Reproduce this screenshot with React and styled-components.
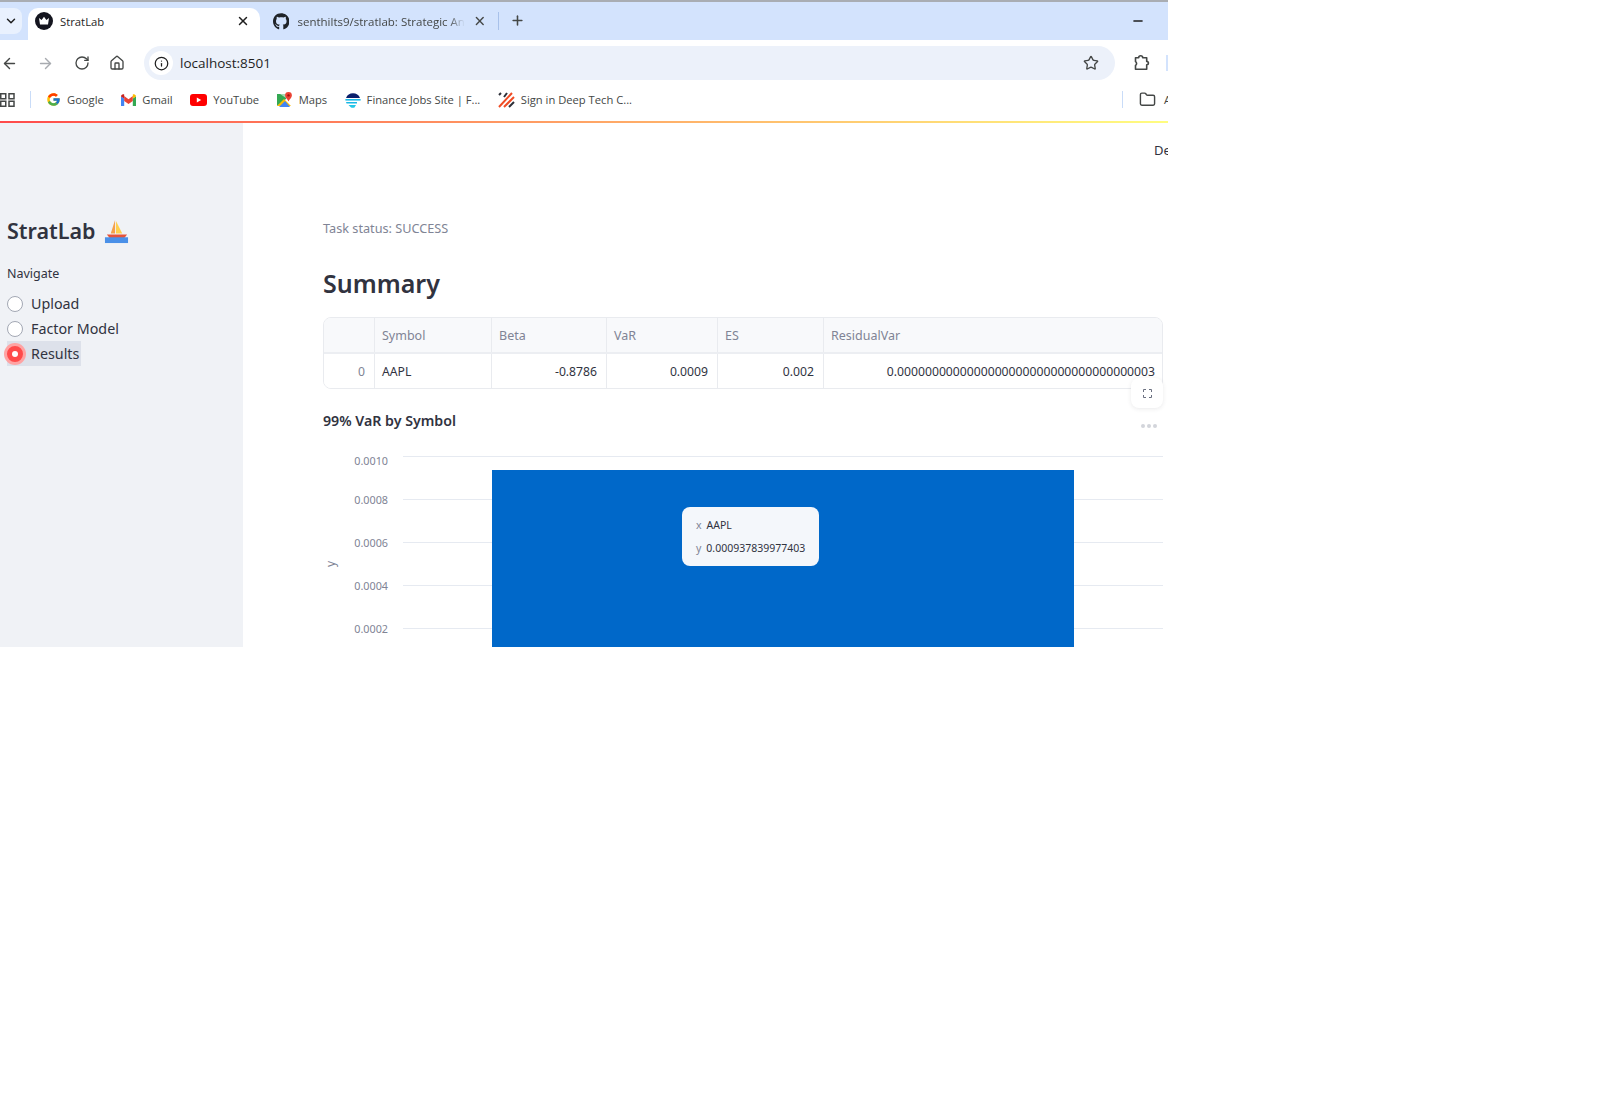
import React from "react";
import styled, { createGlobalStyle } from "styled-components";
import {
  ArrowLeft,
  ArrowRight,
  ChevronDown,
  Folder,
  House,
  Info,
  Minus,
  Plus,
  RotateCw,
  Star,
  X,
} from "lucide-react";
import { FaGithub } from "react-icons/fa";
import { FcGoogle } from "react-icons/fc";

const GlobalStyle = createGlobalStyle`
  html, body {
    margin: 0;
    padding: 0;
    background: #fff;
  }
  * {
    box-sizing: border-box;
  }
`;

const chromeFont = `"Open Sans", "Noto Sans", sans-serif`;
const appFont = `"Noto Sans", "Open Sans", sans-serif`;

function CrownIcon() {
  return (
    <svg width="18" height="18" viewBox="0 0 18 18">
      <circle cx="9" cy="9" r="9" fill="#14151f" />
      <path d="M4 6l2.6 2L9 4.8 11.4 8 14 6l-1 6.4H5z" fill="#fff" />
    </svg>
  );
}

function GmailIcon() {
  return (
    <svg width="15" height="12" viewBox="0 0 15 12">
      <path d="M0 2.2V12h3.2V4.6z" fill="#4285f4" />
      <path d="M15 2.2V12h-3.2V4.6z" fill="#34a853" />
      <path d="M3.2 7V2l4.3 3.2L11.8 2v5L7.5 10z" fill="#ea4335" />
      <path d="M0 2.4C0 .6 2 -.5 3.2 .6V4.6z" fill="#c5221f" />
      <path d="M15 2.4C15 .6 13 -.5 11.8 .6V4.6z" fill="#fbbc04" />
    </svg>
  );
}

function YouTubeIcon() {
  return (
    <svg width="17" height="12" viewBox="0 0 17 12">
      <rect width="17" height="12" rx="3" fill="#f00" />
      <path d="M6.8 3.4v5.2L11.2 6z" fill="#fff" />
    </svg>
  );
}

function MapsIcon() {
  return (
    <svg width="16" height="16" viewBox="0 0 16 16">
      <path d="M0 2h9v5L0 14z" fill="#34a853" />
      <path d="M0 14l7-7 7 7z" fill="#fbbc04" />
      <path d="M2 15l6-6 5 6z" fill="#4285f4" />
      <path d="M3 2h6v4z" fill="#a8dab5" />
      <path d="M11.5 0a3.4 3.4 0 013.4 3.4c0 2.2-2.3 3.6-3.4 6-1-2.4-3.4-3.8-3.4-6A3.4 3.4 0 0111.5 0z" fill="#ea4335" />
      <circle cx="11.5" cy="3.4" r="1.2" fill="#a50e0e" />
    </svg>
  );
}

function FinanceIcon() {
  return (
    <svg width="16" height="16" viewBox="0 0 16 16">
      <path d="M1 6a7.6 7.6 0 0114 0z" fill="#0b1f6b" />
      <path d="M.4 7h15.2v1.6H.4z" fill="#19b8e6" />
      <path d="M1 10h11v1.5H1.600z" fill="#19b8e6" />
      <path d="M3.500 13h7.500l-1.500 2.600a7 7 0 01-3.500 0z" fill="#23c7e8" />
    </svg>
  );
}

function StripesIcon() {
  return (
    <svg width="17" height="16" viewBox="0 0 17 16" fill="none" strokeWidth="2">
      <path d="M1 3l2-2" stroke="#2c2f38" />
      <path d="M1 15L14 1" stroke="#f04b23" />
      <path d="M6 5l3-4" stroke="#2c2f38" />
      <path d="M6 15l10-10" stroke="#f04b23" />
      <path d="M11 15l5-5" stroke="#2c2f38" />
    </svg>
  );
}

function AppsIcon() {
  return (
    <svg width="15" height="14" viewBox="0 0 15 14" fill="none" stroke="#444746" strokeWidth="1.500">
      <rect x=".75" y=".75" width="5" height="5" />
      <rect x="9" y=".75" width="5" height="5" />
      <rect x=".75" y="8.25" width="5" height="5" />
      <rect x="9" y="8.25" width="5" height="5" />
    </svg>
  );
}

function ExtensionIcon() {
  return (
    <svg width="18" height="18" viewBox="0 0 18 18" fill="none" stroke="#444746" strokeWidth="1.600" strokeLinejoin="round">
      <path d="M2.500 3.800h3.200a2 2 0 014 0h4v3.600a1.700 1.700 0 010 3.400v4.400H2.500v-3.800a2.200 2.200 0 000-3.800z" />
    </svg>
  );
}

function BoatIcon() {
  return (
    <svg width="25" height="25" viewBox="0 0 26 26">
      <path d="M11.500 1L7 15h4.500z" fill="#f4a04a" />
      <path d="M12.500 2v13H19z" fill="#ffd04d" />
      <path d="M3 16h21l-3 4H6z" fill="#e5533a" />
      <rect x="1" y="19" width="24" height="6" fill="#4a90e8" />
    </svg>
  );
}

function ExpandIcon() {
  return (
    <svg width="9" height="9" viewBox="0 0 9 9" fill="none" stroke="#6b7080" strokeWidth="1">
      <path d="M.5 3V.5H3M6 .5h2.500V3M8.500 6v2.500H6M3 8.500H.5V6" />
    </svg>
  );
}

// first label hangs under its line, the rest are centred on theirs
const gridLines = [
  { y: 456, label: "0.0010", dy: 9 },
  { y: 499, label: "0.0008", dy: 5 },
  { y: 542, label: "0.0006", dy: 5 },
  { y: 585, label: "0.0004", dy: 5 },
  { y: 628, label: "0.0002", dy: 5 },
];

// svg origin sits at page y 445, x 323
function BarChart() {
  return (
    <svg width="840" height="203" viewBox="0 0 840 203">
      {gridLines.map((line) => (
        <g key={line.label}>
          <line
            x1="80"
            x2="840"
            y1={line.y - 445 + 0.5}
            y2={line.y - 445 + 0.5}
            stroke="#e6eaf1"
          />
          <text
            x="65"
            y={line.y - 445 + line.dy}
            textAnchor="end"
            fontSize="10.800"
            fontFamily={appFont}
            fill="#808495"
          >
            {line.label}
          </text>
        </g>
      ))}
      <text
        transform="translate(12 119) rotate(-90)"
        textAnchor="middle"
        fontSize="12"
        fontFamily={appFont}
        fill="#808495"
      >
        y
      </text>
      <rect x="169" y="25" width="582" height="178" fill="#0068c9" />
    </svg>
  );
}

const bookmarks = [
  { icon: <FcGoogle size={15} />, label: "Google" },
  { icon: <GmailIcon />, label: "Gmail" },
  { icon: <YouTubeIcon />, label: "YouTube" },
  { icon: <MapsIcon />, label: "Maps" },
  { icon: <FinanceIcon />, label: "Finance Jobs Site | F..." },
  { icon: <StripesIcon />, label: "Sign in Deep Tech C..." },
];

const columns = [
  { label: "", width: 51 },
  { label: "Symbol", width: 117 },
  { label: "Beta", width: 115 },
  { label: "VaR", width: 111 },
  { label: "ES", width: 106 },
  { label: "ResidualVar", width: 340 },
];

const row = [
  { value: "0", align: "right", tone: "#808495" },
  { value: "AAPL", align: "left", tone: "#31333f" },
  { value: "-0.8786", align: "right", tone: "#31333f" },
  { value: "0.0009", align: "right", tone: "#31333f" },
  { value: "0.002", align: "right", tone: "#31333f" },
  {
    value: "0.0000000000000000000000000000000000003",
    align: "right",
    tone: "#31333f",
  },
];

const navItems = [
  { label: "Upload" },
  { label: "Factor Model" },
  { label: "Results", active: true },
];

export default function App() {
  const template = columns.map((c) => `${c.width}px`).join(" ");
  return (
    <>
      <GlobalStyle />
      <Shot>
        <TabStrip>
          <TabSearch>
            <ChevronDown size={14} strokeWidth={2.5} color="#1f1f1f" />
          </TabSearch>
          <ActiveTab>
            <CrownIcon />
            <TabTitle>StratLab</TabTitle>
            <X size={14} strokeWidth={2.5} color="#1f1f1f" />
          </ActiveTab>
          <IdleTab>
            <FaGithub size={17} color="#1f2328" />
            <IdleTitle>senthilts9/stratlab: Strategic Ana</IdleTitle>
            <X size={14} strokeWidth={2.5} color="#444746" />
          </IdleTab>
          <TabDivider />
          <Plus size={15} strokeWidth={2.5} color="#444746" />
          <WindowControls>
            <Minus size={14} strokeWidth={2.5} color="#1f1f1f" />
          </WindowControls>
        </TabStrip>

        <Toolbar>
          <NavIcons>
            <ArrowLeft size={17} color="#444746" />
            <ArrowRight size={17} color="#a8abb0" />
            <RotateCw size={16} color="#444746" />
            <House size={16} color="#444746" />
          </NavIcons>
          <AddressBar>
            <InfoBadge>
              <Info size={15} color="#1f1f1f" />
            </InfoBadge>
            <Url>localhost:8501</Url>
            <Star size={16} color="#444746" />
          </AddressBar>
          <ExtensionSlot>
            <ExtensionIcon />
          </ExtensionSlot>
          <ProfileSliver />
        </Toolbar>

        <BookmarkBar>
          <AppsIcon />
          <BookmarkDivider />
          <BookmarkList>
            {bookmarks.map((b) => (
              <Bookmark key={b.label}>
                {b.icon}
                <span>{b.label}</span>
              </Bookmark>
            ))}
          </BookmarkList>
          <AllBookmarks>
            <BookmarkDivider />
            <Folder size={17} color="#444746" />
            <span>All</span>
          </AllBookmarks>
        </BookmarkBar>

        <LoadBar />

        <Page>
          <Sidebar>
            <Brand>
              StratLab
              <BoatIcon />
            </Brand>
            <NavLabel>Navigate</NavLabel>
            <RadioGroup>
              {navItems.map((item) => (
                <RadioRow key={item.label} $active={item.active}>
                  <RadioDot $active={item.active} />
                  <RadioText>{item.label}</RadioText>
                </RadioRow>
              ))}
            </RadioGroup>
          </Sidebar>

          <Main>
            <DeployLabel>Deploy</DeployLabel>
            <Status>Task status: SUCCESS</Status>
            <Heading>Summary</Heading>
            <TableWrap>
              <DataTable>
                <TableRow $template={template} $head>
                  {columns.map((c) => (
                    <HeadCell key={c.label || "index"}>{c.label}</HeadCell>
                  ))}
                </TableRow>
                <TableRow $template={template}>
                  {row.map((c, i) => (
                    <BodyCell key={i} $align={c.align} $tone={c.tone}>
                      {c.value}
                    </BodyCell>
                  ))}
                </TableRow>
              </DataTable>
              <ExpandButton>
                <ExpandIcon />
              </ExpandButton>
            </TableWrap>
            <ChartHead>
              <ChartTitle>99% VaR by Symbol</ChartTitle>
              <MoreDots>
                <i />
                <i />
                <i />
              </MoreDots>
            </ChartHead>
            <ChartWrap>
              <BarChart />
              <Tooltip>
                <TipRow>
                  <TipKey>x</TipKey>
                  <TipValue>AAPL</TipValue>
                </TipRow>
                <TipRow>
                  <TipKey>y</TipKey>
                  <TipValue>0.000937839977403</TipValue>
                </TipRow>
              </Tooltip>
            </ChartWrap>
          </Main>
        </Page>
      </Shot>
    </>
  );
}

const Shot = styled.div`
  width: 1168px;
  height: 647px;
  overflow: hidden;
  display: flex;
  flex-direction: column;
  background: #fff;
  font-family: ${chromeFont};
`;

const TabStrip = styled.div`
  height: 40px;
  flex: none;
  display: flex;
  align-items: flex-end;
  background: #d3e3fd;
  border-top: 2px solid #a9adb3;
  & > svg {
    align-self: center;
    margin: -2px 0 0 11px;
  }
`;

const TabSearch = styled.div`
  width: 22px;
  height: 26px;
  margin: 0 6px 6px 0;
  display: flex;
  align-items: center;
  justify-content: center;
  background: #e9f1fe;
  border-radius: 0 8px 8px 0;
`;

const ActiveTab = styled.div`
  width: 232px;
  height: 32px;
  padding: 0 10px 6px 7px;
  display: flex;
  align-items: center;
  gap: 7px;
  background: #fff;
  border-radius: 10px 10px 0 0;
  & > svg:last-child {
    margin-left: auto;
  }
`;

const TabTitle = styled.span`
  font-size: 11.300px;
  color: #1f1f1f;
`;

const IdleTab = styled.div`
  width: 238px;
  height: 32px;
  padding: 0 11px 6px 13px;
  display: flex;
  align-items: center;
  gap: 8px;
`;

const IdleTitle = styled.span`
  width: 168px;
  flex: none;
  overflow: hidden;
  white-space: nowrap;
  font-size: 11.500px;
  color: #444746;
  -webkit-mask-image: linear-gradient(90deg, #000 90%, transparent);
  mask-image: linear-gradient(90deg, #000 90%, transparent);
`;

const TabDivider = styled.div`
  width: 1px;
  height: 18px;
  margin-bottom: 10px;
  background: #a8c1ea;
`;

const WindowControls = styled.div`
  margin: -1px 23px 0 auto;
  align-self: center;
  display: flex;
`;

const Toolbar = styled.div`
  height: 46px;
  flex: none;
  display: flex;
  align-items: center;
  background: #fff;
`;

const NavIcons = styled.div`
  width: 144px;
  flex: none;
  padding: 0 19px 0 1px;
  display: flex;
  align-items: center;
  justify-content: space-between;
`;

const AddressBar = styled.div`
  width: 971px;
  flex: none;
  height: 34px;
  padding: 0 16px 0 5px;
  display: flex;
  align-items: center;
  background: #ecf1fa;
  border-radius: 17px;
  & > svg {
    margin-left: auto;
  }
`;

const InfoBadge = styled.div`
  width: 24px;
  height: 24px;
  display: flex;
  align-items: center;
  justify-content: center;
  background: #fff;
  border-radius: 50%;
`;

const Url = styled.span`
  margin-left: 7px;
  font-size: 13.500px;
  color: #1f1f1f;
`;

const ExtensionSlot = styled.div`
  margin-left: 18px;
  flex: none;
  display: flex;
`;

const ProfileSliver = styled.div`
  width: 6px;
  height: 16px;
  flex: none;
  margin-left: 15px;
  background: #d3e3fd;
`;

const BookmarkBar = styled.div`
  height: 35px;
  flex: none;
  padding-bottom: 8px;
  display: flex;
  align-items: center;
  background: #fff;
`;

const BookmarkDivider = styled.div`
  width: 1px;
  height: 17px;
  margin: 0 15px 0 15px;
  background: #c9dcf8;
`;

const BookmarkList = styled.div`
  display: flex;
  align-items: center;
  gap: 17.500px;
`;

const Bookmark = styled.div`
  display: flex;
  align-items: center;
  gap: 6px;
  font-size: 11.200px;
  color: #444746;
  white-space: nowrap;
`;

const AllBookmarks = styled.div`
  margin-left: auto;
  width: 46px;
  flex: none;
  display: flex;
  align-items: center;
  font-size: 11.300px;
  color: #444746;
  & > span {
    margin-left: 8px;
  }
  & > div {
    margin: 0 16px 0 0;
    flex: none;
  }
  & > svg {
    flex: none;
  }
`;

const LoadBar = styled.div`
  height: 2px;
  flex: none;
  background: linear-gradient(90deg, #ff4b4b, #fffd80);
`;

const Page = styled.div`
  flex: 1;
  min-height: 0;
  display: flex;
`;

const Sidebar = styled.aside`
  width: 243px;
  flex: none;
  padding: 93px 0 0 7px;
  background: #f0f2f6;
  font-family: ${appFont};
  color: #31333f;
`;

const Brand = styled.h1`
  margin: 0;
  display: flex;
  align-items: center;
  gap: 8px;
  height: 30px;
  font-size: 21.500px;
  font-weight: 600;
  line-height: 30px;
`;

const NavLabel = styled.div`
  margin-top: 19px;
  font-size: 12.500px;
  line-height: 18px;
`;

const RadioGroup = styled.div`
  margin-top: 8px;
  display: flex;
  flex-direction: column;
`;

const RadioRow = styled.div`
  height: 25px;
  display: flex;
  align-items: center;
  gap: 8px;
  width: ${(p) => (p.$active ? "74px" : "auto")};
  background: ${(p) => (p.$active ? "#dde1ea" : "transparent")};
`;

const RadioDot = styled.span`
  width: 16px;
  height: 16px;
  flex: none;
  border-radius: 50%;
  background: ${(p) => (p.$active ? "#ff4b4b" : "#fff")};
  border: ${(p) => (p.$active ? "5px solid #ff4b4b" : "1.5px solid #a3a8b4")};
  box-shadow: ${(p) => (p.$active ? "0 0 0 3px #ffa3a3" : "none")};
  &::after {
    content: "";
    display: ${(p) => (p.$active ? "block" : "none")};
    width: 6px;
    height: 6px;
    border-radius: 50%;
    background: #fff;
  }
`;

const RadioText = styled.span`
  font-size: 14.300px;
  color: #31333f;
`;

const Main = styled.main`
  position: relative;
  flex: 1;
  min-width: 0;
  padding: 95px 0 0 80px;
  font-family: ${appFont};
`;

const DeployLabel = styled.span`
  position: absolute;
  top: 18px;
  left: 911px;
  font-size: 13px;
  color: #31333f;
`;

const Status = styled.div`
  font-size: 12.700px;
  line-height: 20px;
  color: #808495;
`;

const Heading = styled.h2`
  margin: 24px 0 0;
  font-size: 25px;
  line-height: 42px;
  font-weight: 600;
  color: #31333f;
`;

const TableWrap = styled.div`
  position: relative;
  width: 840px;
  margin-top: 13px;
`;

const DataTable = styled.div`
  border: 1px solid #e9ebef;
  border-radius: 8px;
  overflow: hidden;
`;

const TableRow = styled.div`
  display: grid;
  grid-template-columns: ${(p) => p.$template};
  height: ${(p) => (p.$head ? "36px" : "34px")};
  background: ${(p) => (p.$head ? "#f8f9fb" : "#fff")};
  border-bottom: ${(p) => (p.$head ? "2px solid #eceef2" : "0")};
`;

const HeadCell = styled.div`
  padding: 0 7px;
  display: flex;
  align-items: center;
  font-size: 12.500px;
  color: #808495;
  border-right: 1px solid #e9ebef;
  &:last-child {
    border-right: 0;
  }
`;

const BodyCell = styled.div`
  padding: 0 ${(p) => (p.$align === "right" ? "9px" : "7px")};
  display: flex;
  align-items: center;
  justify-content: ${(p) => (p.$align === "right" ? "flex-end" : "flex-start")};
  font-size: 12.200px;
  color: ${(p) => p.$tone};
  white-space: nowrap;
  border-right: 1px solid #e9ebef;
  &:last-child {
    border-right: 0;
  }
`;

const ExpandButton = styled.div`
  position: absolute;
  right: 0;
  top: 61px;
  width: 32px;
  height: 30px;
  display: flex;
  align-items: center;
  justify-content: center;
  background: #fff;
  border-radius: 8px;
  box-shadow: 0 1px 4px rgba(49, 51, 63, 0.1);
`;

const ChartHead = styled.div`
  width: 840px;
  height: 24px;
  margin-top: 19px;
  display: flex;
  align-items: center;
  justify-content: space-between;
`;

const ChartTitle = styled.div`
  font-size: 14.200px;
  font-weight: 600;
  color: #31333f;
`;

const MoreDots = styled.div`
  margin: 12px 6px 0 0;
  display: flex;
  gap: 2px;
  & > i {
    width: 4px;
    height: 4px;
    border-radius: 50%;
    background: #d3d5db;
  }
`;

const ChartWrap = styled.div`
  position: relative;
  width: 840px;
  height: 203px;
  margin-top: 13px;
`;

const Tooltip = styled.div`
  position: absolute;
  left: 359px;
  top: 62px;
  width: 137px;
  height: 59px;
  padding: 7px 14px;
  display: flex;
  flex-direction: column;
  justify-content: space-between;
  background: #f4f7fb;
  border-radius: 8px;
`;

const TipRow = styled.div`
  display: flex;
  align-items: center;
  gap: 5px;
  height: 22px;
  font-size: 10.500px;
`;

const TipKey = styled.span`
  color: #808495;
`;

const TipValue = styled.span`
  color: #31333f;
`;
